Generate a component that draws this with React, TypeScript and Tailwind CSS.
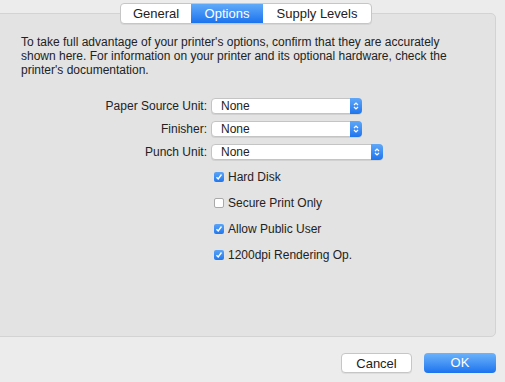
import React from "react";

const font = { fontFamily: '"Helvetica Neue", "Liberation Sans", Arial, sans-serif' };

function Popup({ width }: { width: string }) {
  return (
    <div className={`flex h-[16px] ${width} items-center rounded-[4px] border border-[#c4c4c4] bg-white shadow-[0_1px_0_rgba(0,0,0,0.08)]`}>
      <span className="flex-1 pl-[9px] text-[12px] leading-none text-[#222]">None</span>
      <div className="mr-[-1px] flex h-[16px] w-[12px] items-center justify-center rounded-r-[4px] bg-gradient-to-b from-[#5fa8f8] to-[#1d74ee]">
        <svg width="6" height="10" viewBox="0 0 6 10" fill="none" stroke="white" strokeWidth="1.2">
          <path d="M1 4 L3 2 L5 4" />
          <path d="M1 6 L3 8 L5 6" />
        </svg>
      </div>
    </div>
  );
}

function Check({ checked, label }: { checked: boolean; label: string }) {
  return (
    <div className="flex h-[26px] items-center">
      {checked ? (
        <div className="flex h-[10px] w-[10px] items-center justify-center rounded-[2px] bg-gradient-to-b from-[#5aa5f7] to-[#1f76ee]">
          <svg width="8" height="8" viewBox="0 0 8 8" fill="none" stroke="white" strokeWidth="1.4">
            <path d="M1.5 4.2 L3.2 6 L6.5 1.5" />
          </svg>
        </div>
      ) : (
        <div className="h-[10px] w-[10px] rounded-[2px] border border-[#a9a9a9] bg-white" />
      )}
      <span className="ml-[4px] text-[12px] text-[#222]">{label}</span>
    </div>
  );
}

export default function App() {
  return (
    <div className="relative h-[382px] w-[505px] overflow-hidden bg-[#ececec]" style={font}>
      <div className="flex flex-col">
        <div className="flex h-[337px] pt-[13px]">
          <div className="ml-[-6px] flex w-[502px] flex-col rounded-[5px] border border-[#d3d3d3] bg-[#e3e3e3]">
            <div className="pl-[26px] pt-[21px] text-[12px] leading-[14px] text-[#222]">
              To take full advantage of your printer's options, confirm that they are accurately<br />
              shown here. For information on your printer and its optional hardware, check the<br />
              printer's documentation.
            </div>
            <div className="mt-[21px] grid grid-cols-[216px_auto] gap-y-[7px]">
              <div className="pr-[4px] text-right text-[12px] leading-[16px] text-[#222]">Paper Source Unit:</div>
              <Popup width="w-[151px]" />
              <div className="pr-[4px] text-right text-[12px] leading-[16px] text-[#222]">Finisher:</div>
              <Popup width="w-[151px]" />
              <div className="pr-[4px] text-right text-[12px] leading-[16px] text-[#222]">Punch Unit:</div>
              <Popup width="w-[172px]" />
            </div>
            <div className="ml-[219px] mt-[4px] flex flex-col">
              <Check checked label="Hard Disk" />
              <Check checked={false} label="Secure Print Only" />
              <Check checked label="Allow Public User" />
              <Check checked label="1200dpi Rendering Op." />
            </div>
          </div>
        </div>
        <div className="flex justify-end gap-[12px] pr-[9px] pt-[16px]">
          <button className="h-[20px] w-[71px] rounded-[4px] border border-[#c6c6c6] bg-white text-[13px] text-[#222] shadow-[0_1px_0_rgba(0,0,0,0.06)]">Cancel</button>
          <button className="h-[20px] w-[72px] rounded-[4px] bg-gradient-to-b from-[#6cb3fa] to-[#1a73ee] text-[13px] text-white">OK</button>
        </div>
      </div>
      <div className="absolute left-[120px] top-[3px] flex h-[21px] overflow-hidden rounded-[4px] border border-[#c6c6c6] bg-white text-[13px] text-[#222] shadow-[0_1px_0_rgba(0,0,0,0.06)]">
        <div className="flex w-[70px] items-center justify-center">General</div>
        <div className="flex w-[72px] items-center justify-center bg-gradient-to-b from-[#5faaf8] to-[#1a72ee] text-white">Options</div>
        <div className="flex w-[108px] items-center justify-center">Supply Levels</div>
      </div>
    </div>
  );
}
